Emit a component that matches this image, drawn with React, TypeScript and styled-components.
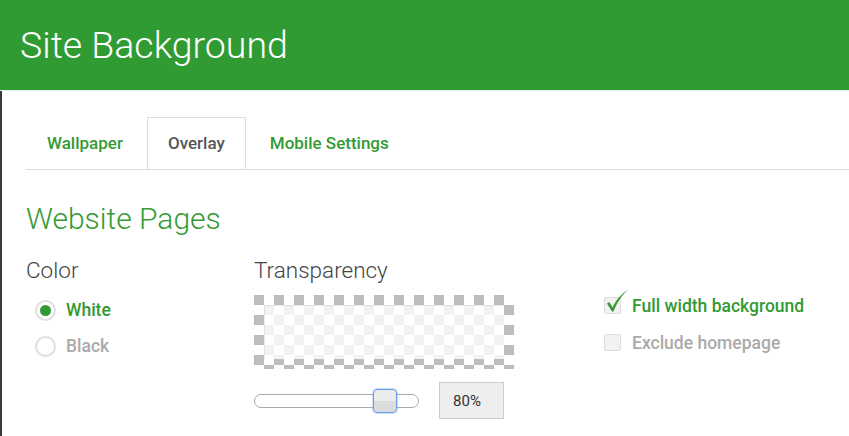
import styled, { createGlobalStyle } from "styled-components";

const green = "#339a33";

const GlobalStyle = createGlobalStyle`
  body {
    margin: 0;
    font-family: Roboto, "Liberation Sans", sans-serif;
    background: #fff;
  }
`;

const Page = styled.div`
  width: 849px;
  height: 436px;
  overflow: hidden;
  display: flex;
  flex-direction: column;
`;

const Header = styled.div`
  height: 90px;
  flex-shrink: 0;
  background-color: #319b33;
  display: flex;
  align-items: center;
  padding-left: 20px;
  border-bottom: 1px solid #e6f2e6;
`;

const Title = styled.h1`
  margin: 0;
  font-size: 37.5px;
  font-weight: 300;
  color: #fff;
  line-height: 1;
  padding-top: 2px;
`;

const Body = styled.div`
  flex: 1;
  border-left: 2px solid #3a3a3a;
  padding: 26px 0 0 24px;
`;

const Tabs = styled.div`
  display: flex;
  border-bottom: 1px solid #dcdcdc;
`;

const Tab = styled.div<{ $active?: boolean }>`
  height: 50px;
  padding: 0 20px 1px;
  margin-right: 3px;
  display: flex;
  align-items: center;
  font-size: 17px;
  font-weight: 500;
  color: ${(p) => (p.$active ? "#555" : green)};
  border: 1px solid ${(p) => (p.$active ? "#dcdcdc" : "transparent")};
  border-bottom: none;
  background: ${(p) => (p.$active ? "#fff" : "transparent")};
  margin-bottom: ${(p) => (p.$active ? "-1px" : "0")};
  cursor: pointer;
`;

const SectionTitle = styled.h2`
  margin: 32px 0 0;
  font-size: 30px;
  font-weight: 300;
  color: ${green};
  line-height: 33px;
`;

const Row = styled.div`
  display: flex;
  margin-top: 23px;
`;

const Column = styled.div<{ $width?: number }>`
  width: ${(p) => (p.$width ? `${p.$width}px` : "auto")};
  flex-shrink: 0;
  display: flex;
  flex-direction: column;
`;

const Label = styled.div`
  font-size: 22.5px;
  font-weight: 300;
  color: #444;
  line-height: 24px;
`;

const RadioList = styled.div`
  margin-top: 10px;
  padding-left: 9px;
  display: flex;
  flex-direction: column;
`;

const Option = styled.label<{ $on?: boolean }>`
  height: 36px;
  display: flex;
  align-items: center;
  gap: 10px;
  font-size: 17.5px;
  font-weight: 500;
  color: ${(p) => (p.$on ? green : "#aaa")};
  cursor: pointer;
`;

const RadioCircle = styled.span<{ $on?: boolean }>`
  width: 17px;
  height: 17px;
  border-radius: 50%;
  border: 2px solid #e0e0e0;
  background: #fff;
  display: flex;
  align-items: center;
  justify-content: center;

  &::after {
    content: "";
    width: 11px;
    height: 11px;
    border-radius: 50%;
    background: ${(p) => (p.$on ? green : "transparent")};
  }
`;

const Preview = styled.div`
  margin-top: 13px;
  width: 260px;
  height: 74px;
  box-sizing: border-box;
  padding: 10px;
  display: flex;
  background: conic-gradient(#fff 25%, #bdbdbd 0 50%, #fff 0 75%, #bdbdbd 0) 0 0 / 20px 20px;
`;

const Overlay = styled.div`
  flex: 1;
  background: rgba(255, 255, 255, 0.8);
  box-shadow: inset 1px 1px 0 rgba(0, 0, 0, 0.08);
`;

const SliderRow = styled.div`
  margin-top: 13px;
  display: flex;
  align-items: center;
  gap: 20px;
`;

const Track = styled.div`
  position: relative;
  width: 165px;
  height: 14px;
  box-sizing: border-box;
  border: 1px solid #aaa;
  border-radius: 7px;
  background: #fff;
`;

const Thumb = styled.div`
  position: absolute;
  top: -6px;
  width: 24px;
  height: 24px;
  box-sizing: border-box;
  border: 1px solid #6c9ef0;
  border-radius: 4px;
  background: linear-gradient(#ececec 0 50%, #dcdcdc 50%);
  box-shadow: 0 0 0 1px rgba(108, 158, 240, 0.35);
`;

const ValueBox = styled.div`
  width: 65px;
  height: 37px;
  box-sizing: border-box;
  border: 1px solid #ccc;
  background: #eee;
  display: flex;
  align-items: center;
  padding-left: 13px;
  font-size: 15px;
  color: #333;
`;

const CheckList = styled.div`
  padding-top: 29px;
  display: flex;
  flex-direction: column;
`;

const CheckOption = styled.label<{ $on?: boolean }>`
  height: 37px;
  display: flex;
  align-items: center;
  gap: 11px;
  font-size: 17.5px;
  font-weight: 500;
  color: ${(p) => (p.$on ? green : "#aaa")};
  cursor: pointer;
`;

const Box = styled.span`
  position: relative;
  width: 17px;
  height: 17px;
  box-sizing: border-box;
  border: 1px solid #ddd;
  border-radius: 2px;
  background: #f2f2f2;
`;

const CheckMark = styled.svg`
  position: absolute;
  left: 1px;
  top: -9px;
  width: 24px;
  height: 24px;
  overflow: visible;
`;

function Radio({ on, children }: { on?: boolean; children: string }) {
  return (
    <Option $on={on}>
      <RadioCircle $on={on} />
      {children}
    </Option>
  );
}

function Checkbox({ on, children }: { on?: boolean; children: string }) {
  return (
    <CheckOption $on={on}>
      <Box>
        {on && (
          <CheckMark viewBox="0 0 24 24">
            <path
              d="M1 14.5 L3.2 13 L6.6 18.6 C10 11 15 5.5 22 0.5 C16 6 11.5 13 7.4 22.5 L6 22.5 Z"
              fill={green}
            />
          </CheckMark>
        )}
      </Box>
      {children}
    </CheckOption>
  );
}

export default function App() {
  const transparency = 80;
  const thumbLeft = Math.round((165 - 24 - 2) * (transparency / 100)) + 7;

  return (
    <Page>
      <GlobalStyle />
      <Header>
        <Title>Site Background</Title>
      </Header>
      <Body>
        <Tabs>
          <Tab>Wallpaper</Tab>
          <Tab $active>Overlay</Tab>
          <Tab>Mobile Settings</Tab>
        </Tabs>
        <SectionTitle>Website Pages</SectionTitle>
        <Row>
          <Column $width={228}>
            <Label>Color</Label>
            <RadioList>
              <Radio on>White</Radio>
              <Radio>Black</Radio>
            </RadioList>
          </Column>
          <Column $width={350}>
            <Label>Transparency</Label>
            <Preview>
              <Overlay />
            </Preview>
            <SliderRow>
              <Track>
                <Thumb style={{ left: thumbLeft }} />
              </Track>
              <ValueBox>{transparency}%</ValueBox>
            </SliderRow>
          </Column>
          <Column>
            <CheckList>
              <Checkbox on>Full width background</Checkbox>
              <Checkbox>Exclude homepage</Checkbox>
            </CheckList>
          </Column>
        </Row>
      </Body>
    </Page>
  );
}
